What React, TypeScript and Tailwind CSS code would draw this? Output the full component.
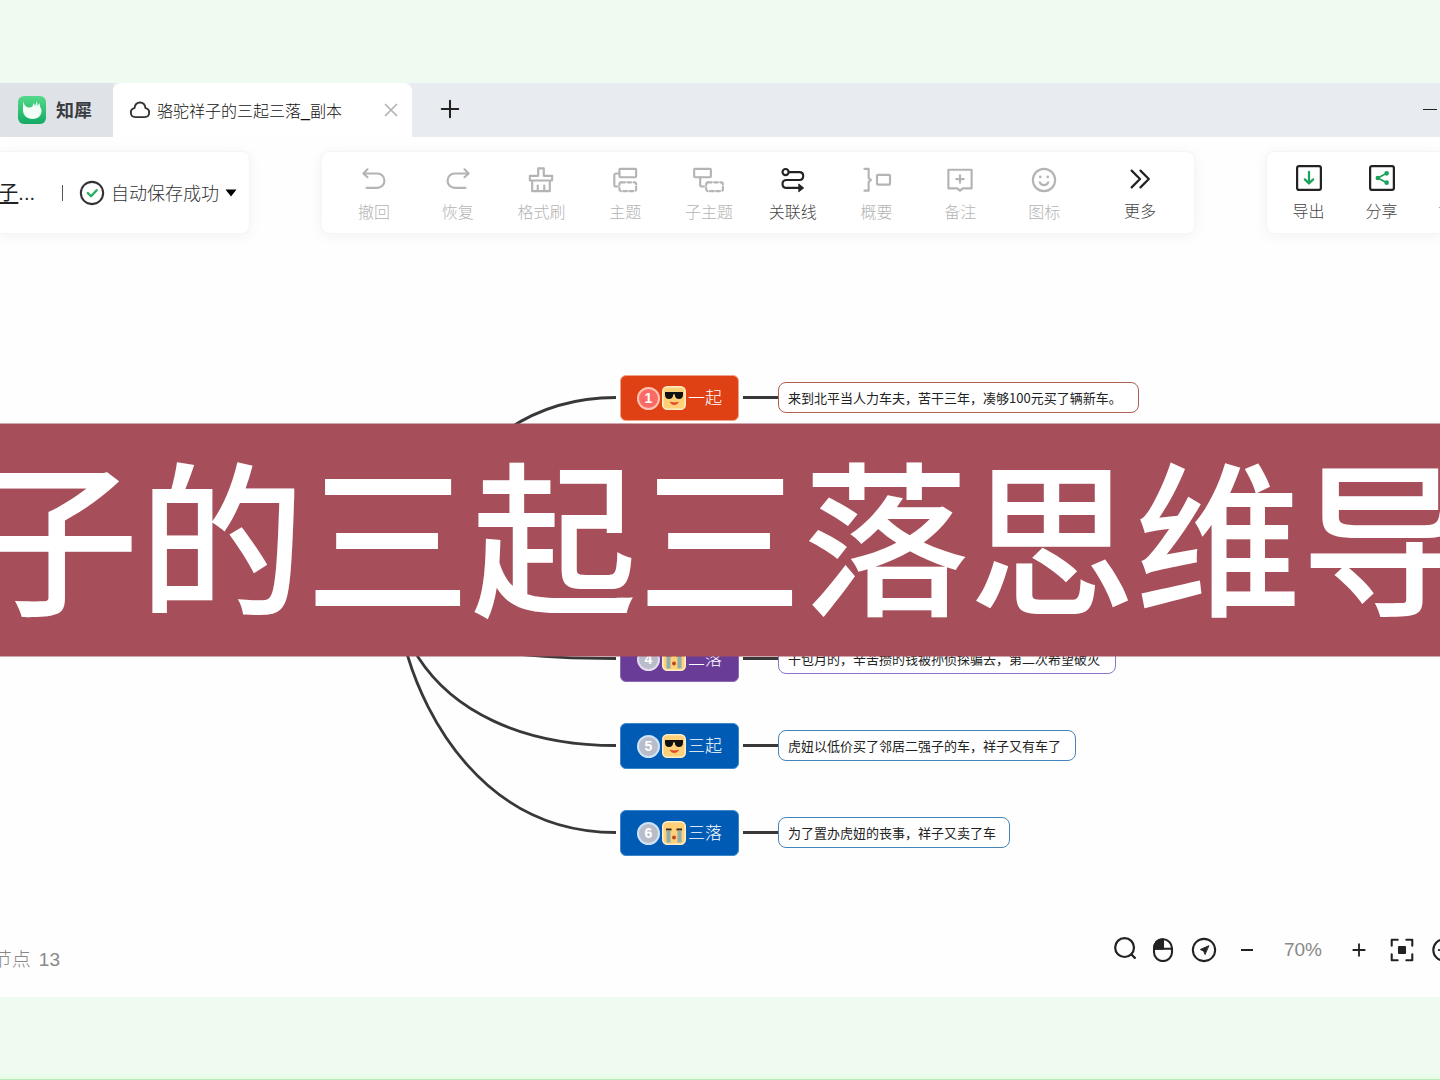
import type { ReactNode } from "react";
import clsx from "clsx";

type Mood = "cool" | "cry";

const branches: {
  no: number;
  title: string;
  mood: Mood;
  text: string;
  node: string;
  badge: string;
  leaf: string;
}[] = [
  {
    no: 1,
    title: "一起",
    mood: "cool",
    text: "来到北平当人力车夫，苦干三年，凑够100元买了辆新车。",
    node: "top-[141px] bg-[#df4014] border-[#f0a48e]",
    badge: "bg-[#fa6b66] border-[#fdc4b4]",
    leaf: "top-[148px] w-[361px] border-[#b0604f]",
  },
  {
    no: 4,
    title: "二落",
    mood: "cry",
    text: "干包月的，辛苦攒的钱被孙侦探骗去，第二次希望破灭",
    node: "top-[402px] bg-[#693c97] border-[#8d68b5]",
    badge: "bg-[#b9bcc9] border-[#e3dcf0]",
    leaf: "top-[409px] w-[338px] border-[#8f74c6]",
  },
  {
    no: 5,
    title: "三起",
    mood: "cool",
    text: "虎妞以低价买了邻居二强子的车，祥子又有车了",
    node: "top-[489px] bg-[#005bb4] border-[#3c86cb]",
    badge: "bg-[#b9bcc9] border-[#cfe4f8]",
    leaf: "top-[496px] w-[298px] border-[#4484bb]",
  },
  {
    no: 6,
    title: "三落",
    mood: "cry",
    text: "为了置办虎妞的丧事，祥子又卖了车",
    node: "top-[576px] bg-[#005bb4] border-[#3c86cb]",
    badge: "bg-[#b9bcc9] border-[#cfe4f8]",
    leaf: "top-[583px] w-[232px] border-[#4484bb]",
  },
];

const Icon = ({
  children,
  size = "size-7",
  width = 2,
}: {
  children: ReactNode;
  size?: string;
  width?: number;
}) => (
  <svg
    viewBox="0 0 28 28"
    className={clsx("shrink-0", size)}
    fill="none"
    stroke="currentColor"
    strokeWidth={width}
    strokeLinecap="round"
    strokeLinejoin="round"
    aria-hidden="true"
  >
    {children}
  </svg>
);

const tools: { label: string; active?: boolean; icon: ReactNode }[] = [
  {
    label: "撤回",
    icon: <path d="M7 2.500 2.500 7 7 11M3 7h14.500a7.700 7.700 0 0 1 0 15.500H6" />,
  },
  {
    label: "恢复",
    icon: <path d="m21 2.500 4.500 4.500-4.500 4M25 7H10.500a7.700 7.700 0 0 0 0 15.500H22" />,
  },
  {
    label: "格式刷",
    icon: (
      <path d="M11 9.500V1.500h6v8h9v5H2v-5zM4.500 14.500V26h19V14.500M10.500 20v6M17.500 20v6" />
    ),
  },
  {
    label: "主题",
    icon: (
      <>
        <rect x="8" y="2" width="18" height="9" rx="1" />
        <path d="M8 7H4.500A2 2 0 0 0 2.500 9v10a2 2 0 0 0 2 2H6" />
        <rect x="8" y="16.500" width="18" height="9.500" rx="2" strokeDasharray="4 2.600" />
      </>
    ),
  },
  {
    label: "子主题",
    icon: (
      <>
        <rect x="-2" y="2" width="18" height="9" rx="1" />
        <path d="M4.500 11V19a2 2 0 0 0 2 2H9" />
        <rect x="11" y="16.500" width="18" height="9.500" rx="2" strokeDasharray="4 2.600" />
      </>
    ),
  },
  {
    label: "关联线",
    active: true,
    icon: (
      <>
        <circle cx="6" cy="5.500" r="3.300" />
        <path d="M9.500 5.500H21c2.500 0 4 1.500 4 4.300s-1.500 4.200-4 4.200H7c-2.700 0-4.300 1.700-4.300 4.300S4.300 22.500 7 22.500h14" />
        <path d="m20.500 18.500 5 4-5 4z" fill="currentColor" strokeWidth="1" />
      </>
    ),
  },
  {
    label: "概要",
    icon: (
      <>
        <path d="M.5 2H5v10l2.500 2L5 16v9.500H.500" />
        <rect x="14" y="8.500" width="14" height="10.500" rx="1" />
      </>
    ),
  },
  {
    label: "备注",
    icon: (
      <>
        <path d="M1.500 3h25v20h-9.500L14 25.500 11 23H1.500z" />
        <path d="M14 9v8M10 13h8" />
      </>
    ),
  },
  {
    label: "图标",
    icon: (
      <>
        <circle cx="14" cy="14" r="12" />
        <path d="M9.500 16.500c1.500 4 7.500 4 9 0" />
        <path d="M10 10.500v.2M18 10.500v.2" strokeWidth="2.800" />
      </>
    ),
  },
];

const Face = ({ mood }: { mood: Mood }) => (
  <svg viewBox="0 0 24 24" className="size-6 shrink-0" aria-hidden="true">
    <rect x=".8" y=".8" width="22.400" height="22.400" rx="4.500" fill="#ffd077" stroke="#ffedc8" strokeWidth="1.600" />
    {mood === "cool" ? (
      <>
        <path d="M3 6h18v2.500c0 3-1.500 4.500-4 4.500s-4-1.500-4.300-4.800h-1.400C11 11.500 9.500 13 7 13s-4-1.500-4-4.500z" fill="#111" />
        <path d="M8 16c2 3.500 6.500 3.500 8.500 0-2.500 1-6 1-8.500 0z" fill="#e0452c" stroke="#e0452c" strokeWidth=".6" />
      </>
    ) : (
      <>
        <path d="M4 8.500h5.500M14.500 8.500H20" stroke="#3a2a1a" strokeWidth="1.800" />
        <path d="M4.500 9.500H8.500V21.500H4.500zM15.500 9.500H19.500V21.500h-4z" fill="#8eaeb0" />
        <circle cx="12" cy="16.500" r="1.900" fill="#b8461f" />
      </>
    )}
  </svg>
);

const ToolButton = ({
  label,
  active,
  className = "flex-1 gap-[6px] pt-[15px]",
  children,
}: {
  label: string;
  active?: boolean;
  className?: string;
  children: ReactNode;
}) => (
  <button
    type="button"
    className={clsx(
      "flex h-full flex-col items-center",
      active ? "text-[#222]" : "text-[#b4b4b4]",
      className
    )}
  >
    {children}
    <span
      className={clsx(
        "whitespace-nowrap text-base leading-7 font-light",
        active && "text-[#444]"
      )}
    >
      {label}
    </span>
  </button>
);

const TabBar = () => (
  <header className="flex h-[54px] shrink-0 bg-[#e8ebf0]">
    <div className="flex w-[113px] shrink-0 items-center gap-[10px] bg-[#dfe3e8] pl-[18px]">
      <svg viewBox="0 0 28 28" className="size-7 shrink-0" aria-hidden="true">
        <defs>
          <linearGradient id="logo" x1="0" y1="0" x2="0" y2="1">
            <stop offset="0" stopColor="#55d98a" />
            <stop offset="1" stopColor="#12ab63" />
          </linearGradient>
        </defs>
        <rect width="28" height="28" rx="6" fill="url(#logo)" />
        <path
          d="M5.500 5c0 3 1.500 5 3.500 6 2 1 4 .5 5.500-.5L15.500 7l1.500 3 2-5 .5 5 2-3 .5 4c1 1 1.500 2.500 1.500 4 0 5-4 8-9 8-5.500 0-9.500-3.500-9.500-9 0-3 0-5.500.500-9z"
          fill="#f4fff8"
        />
      </svg>
      <span className="pt-px text-lg font-bold whitespace-nowrap text-[#3a3d42]">知犀</span>
    </div>
    <div className="flex w-[299px] shrink-0 items-center rounded-t-lg bg-white pl-4 text-[#333]">
      <Icon size="size-[22px]" width={2.4}>
        <path d="M8 23a5.700 5.700 0 0 1-1-11.300C7.500 7 10.500 4.500 14 4.500s6.500 2.500 7 7.200A5.700 5.700 0 0 1 20 23z" />
      </Icon>
      <span className="ml-[6px] flex-1 pt-[3px] text-base font-light whitespace-nowrap text-[#111]">
        骆驼祥子的三起三落_副本
      </span>
      <button type="button" aria-label="关闭标签" className="mr-[10px] text-[#b3b3b3]">
        <Icon size="size-[22px]" width={2.2}>
          <path d="m7 7 14 14M21 7 7 21" />
        </Icon>
      </button>
    </div>
    <button type="button" aria-label="新建标签" className="w-[76px] pb-[2px] pl-[27px] text-[#222]">
      <Icon size="size-[22px]" width={2.6}>
        <path d="M14 3.500v21M3.500 14h21" />
      </Icon>
    </button>
    <button type="button" aria-label="最小化" className="ml-auto w-[17px] pb-[2px] text-[#222]">
      <span className="block h-px w-[14px] bg-current" />
    </button>
  </header>
);

const Toolbar = () => {
  const card = "flex h-[83px] bg-white border border-[#f5f5f5] shadow-[0_2px_14px_rgba(0,0,0,0.05)]";
  const side = "w-[73px] shrink-0 gap-[7px] pt-[13px]";

  return (
    <div className="flex shrink-0 gap-[71px] pt-[14px]">
      <div className={clsx(card, "w-[250px] shrink-0 items-center justify-end rounded-r-lg border-l-0 pr-3")}>
        <span className="pt-px text-xl whitespace-nowrap text-[#222]">
          <u className="underline-offset-2">子</u>...
        </span>
        <span className="mr-4 ml-[27px] h-4 w-px shrink-0 bg-[#555]" />
        <button type="button" className="flex shrink-0 items-center text-[#333]">
          <Icon size="size-[26px]" width={2.2}>
            <circle cx="14" cy="14" r="12" />
            <path d="m9.500 14 3.500 3.500 6-6.500" stroke="#27ae60" strokeWidth="2.600" />
          </Icon>
          <span className="ml-[6px] pt-[2px] text-lg font-light whitespace-nowrap">自动保存成功</span>
          <svg viewBox="0 0 12 8" className="ml-[6px] h-2 w-3 text-black" aria-hidden="true">
            <path d="M.5.500h11L6 7.500z" fill="currentColor" />
          </svg>
        </button>
      </div>

      <nav className={clsx(card, "min-w-0 flex-1 rounded-lg pl-[10px]")}>
        {tools.map((tool) => (
          <ToolButton key={tool.label} label={tool.label} active={tool.active}>
            <svg
              viewBox="-1 0 30 28"
              className="h-[26px] w-8 shrink-0"
              fill="none"
              stroke="currentColor"
              strokeWidth="2.300"
              strokeLinecap="round"
              strokeLinejoin="round"
              overflow="visible"
              aria-hidden="true"
            >
              {tool.icon}
            </svg>
          </ToolButton>
        ))}
        <ToolButton label="更多" active className="w-[108px] gap-[6px] pt-[14px]">
          <Icon size="size-[26px]" width={2.4}>
            <path d="m5 5 9 9-9 9M14.500 5l9 9-9 9" />
          </Icon>
        </ToolButton>
      </nav>

      <div className={clsx(card, "w-[174px] shrink-0 rounded-l-lg border-r-0 pl-[5px]")}>
        <ToolButton label="导出" active className={side}>
          <Icon size="size-[26px]" width={2.4}>
            <rect x="1.200" y="1.200" width="25.600" height="25.600" rx="2" />
            <path d="M14 7.500V20M9.500 15.500 14 20l4.500-4.500" stroke="#1aa35a" />
          </Icon>
        </ToolButton>
        <ToolButton label="分享" active className={side}>
          <Icon size="size-[26px]" width={2.4}>
            <rect x="1.200" y="1.200" width="25.600" height="25.600" rx="2" />
            <g stroke="#1aa35a" fill="#1aa35a" strokeWidth="1.800">
              <path d="M19 9 9.500 14l9.500 5" fill="none" />
              <circle cx="19" cy="9" r="1.600" />
              <circle cx="9.500" cy="14" r="1.600" />
              <circle cx="19" cy="19" r="1.600" />
            </g>
          </Icon>
        </ToolButton>
        <ToolButton label="协作" active className={side}>
          <Icon size="size-[26px]">
            <circle cx="14" cy="9" r="5" />
            <path d="M4 25c1-12 19-12 20 0" />
          </Icon>
        </ToolButton>
      </div>
    </div>
  );
};

const MindMap = () => (
  <main className="relative min-h-[686px] flex-1">
    <svg
      className="absolute top-0 left-0 h-[686px] w-[800px]"
      fill="none"
      stroke="#383838"
      strokeWidth="2.800"
      aria-hidden="true"
    >
      <path d="M395 376 408 339C424 286 480 163.500 616 163.500" />
      <path d="M395 376C430 412 500 424.500 616 424.500" />
      <path d="M395 376 418 423C452 476 520 511.500 616 511.500" />
      <path d="M395 376 408 423C424 476 480 598.500 616 598.500" />
      <path d="M743 163.500h36M743 424.500h36M743 511.500h36M743 598.500h36" />
    </svg>
    {branches.map((b) => (
      <div key={b.no}>
        <div
          className={clsx(
            "absolute left-[620px] flex h-[46px] w-[119px] items-center justify-center gap-[2px] rounded-md border",
            b.node
          )}
        >
          <span
            className={clsx(
              "flex size-[23px] shrink-0 items-center justify-center rounded-full border-2 text-sm font-bold text-white",
              b.badge
            )}
          >
            {b.no}
          </span>
          <Face mood={b.mood} />
          <span className="pt-px text-[17px] font-light whitespace-nowrap text-white">{b.title}</span>
        </div>
        <div
          className={clsx(
            "absolute left-[778px] flex h-[31px] items-center rounded-lg border bg-white pt-px pl-[9px] font-['Noto_Sans_CJK_SC',sans-serif] text-[13px] whitespace-nowrap text-[#222]",
            b.leaf
          )}
        >
          {b.text}
        </div>
      </div>
    ))}
  </main>
);

const StatusBar = () => {
  const btn = "flex shrink-0 items-center justify-center text-[#222]";

  return (
    <footer className="flex h-[77px] shrink-0 items-start justify-between text-[19px] text-[#888]">
      <div className="flex h-20 w-[60px] items-center justify-end gap-2 whitespace-nowrap">
        <span className="font-light">节点</span>
        <span>13</span>
      </div>
      <div className="-mr-6 flex h-[60px] shrink-0">
        <button type="button" aria-label="搜索" className={clsx(btn, "w-[38px] pb-1")}>
          <Icon size="size-6" width={2.6}>
            <circle cx="13.500" cy="13.500" r="11" />
            <path d="m21.500 21.500 4 4" />
          </Icon>
        </button>
        <button type="button" aria-label="鼠标模式" className={clsx(btn, "w-[38px]")}>
          <Icon size="size-6" width={2.4}>
            <path d="M14 1.500C7 1.500 3.500 6 3.500 12.500h10.500z" fill="currentColor" />
            <rect x="3.500" y="1.500" width="21" height="25.500" rx="10.500" />
            <path d="M3.500 12.500h21" />
          </Icon>
        </button>
        <button type="button" aria-label="定位" className={clsx(btn, "w-11")}>
          <Icon size="size-[26px]" width={2.2}>
            <circle cx="14" cy="14" r="12" />
            <path d="m19 9.500-9 4 3.500 1.500 1.500 3.500z" fill="currentColor" strokeWidth="1" />
          </Icon>
        </button>
        <button type="button" aria-label="缩小" className={clsx(btn, "w-[42px]")}>
          <span className="h-[2px] w-3 bg-current" />
        </button>
        <span className="flex w-[70px] items-center justify-center pt-px">70%</span>
        <button type="button" aria-label="放大" className={clsx(btn, "w-[42px]")}>
          <Icon size="size-4" width={3.2}>
            <path d="M14 4v20M4 14h20" />
          </Icon>
        </button>
        <button type="button" aria-label="适应画布" className={clsx(btn, "w-11")}>
          <Icon size="size-6" width={2.4}>
            <path d="M2 9V2h7M19 2h7v7M26 19v7h-7M9 26H2v-7" />
            <rect x="10.500" y="10.500" width="7" height="7" fill="currentColor" />
          </Icon>
        </button>
        <button type="button" aria-label="更多选项" className={clsx(btn, "w-10")}>
          <Icon size="size-6" width={2.4}>
            <circle cx="14" cy="14" r="12.500" />
            <path d="M8 14h.2M14 14h.2M20 14h.2" />
          </Icon>
        </button>
      </div>
    </footer>
  );
};

export default function App() {
  return (
    <div className="relative flex min-h-screen flex-col overflow-hidden bg-[#effaf1] font-['Liberation_Sans','Noto_Sans_CJK_SC',sans-serif]">
      <div className="h-[83px] shrink-0" />
      <div className="flex flex-1 flex-col bg-[#fefefe]">
        <TabBar />
        <Toolbar />
        <MindMap />
        <StatusBar />
      </div>
      <div className="flex h-[83px] shrink-0 items-end">
        <div className="h-[5px] flex-1 border-b border-[#b9edb9] bg-[#e8fde8]" />
      </div>

      {/* title band laid over the canvas */}
      <div className="absolute inset-x-0 top-1/2 flex h-[233px] -translate-y-1/2 items-center justify-center overflow-hidden bg-[#a64f5a] pt-[11px]">
        <h1 className="shrink-0 text-[166px] leading-none font-medium whitespace-nowrap text-white">
          子的三起三落思维导
        </h1>
      </div>
    </div>
  );
}
